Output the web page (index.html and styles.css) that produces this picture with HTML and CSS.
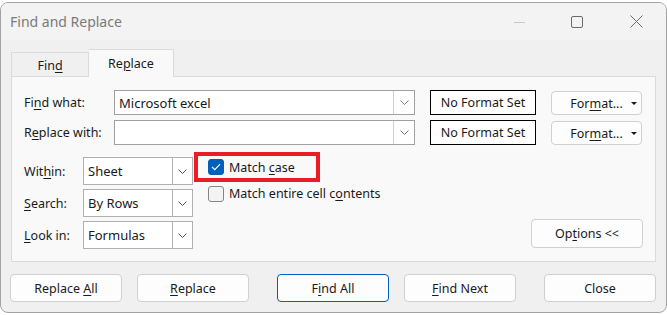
FILE: index.html
```html
<!DOCTYPE html>
<html lang="en">
<head>
  <meta charset="UTF-8" />
  <title>Find and Replace</title>
  <link rel="stylesheet" href="styles.css">
</head>
<body>
  <div class="window">
    <div class="titlebar">
      <span class="title">Find and Replace</span>
      <div class="controls">
        <span class="ctl ctl-min"><svg width="12" height="12" viewBox="0 0 12 12"><line x1="0" y1="6.5" x2="11" y2="6.5" stroke="#c8c8c8" stroke-width="1"/></svg></span>
        <span class="ctl ctl-max"><svg width="12" height="12" viewBox="0 0 12 12"><rect x="0.5" y="0.5" width="11" height="11" rx="1.5" fill="none" stroke="#6a6a6a" stroke-width="1"/></svg></span>
        <span class="ctl ctl-close"><svg width="13" height="13" viewBox="0 0 13 13"><path d="M0.5 0.5 L12.5 12.5 M12.5 0.5 L0.5 12.5" stroke="#6a6a6a" stroke-width="1"/></svg></span>
      </div>
    </div>

    <div class="content">
      <div class="tabs">
        <div class="tab"><span>Fin<u>d</u></span></div>
        <div class="tab active"><span>Re<u>p</u>lace</span></div>
      </div>

      <div class="panel">
        <div class="field-row">
          <span class="label">Fi<u>n</u>d what:</span>
          <div class="combo combo-wide">
            <span class="combo-text">Microsoft excel</span>
            <span class="combo-arrow"><svg width="9" height="5" viewBox="0 0 9 5"><polyline points="0.5,0.5 4.5,4.5 8.5,0.5" fill="none" stroke="#7a7a7a" stroke-width="1"/></svg></span>
          </div>
          <div class="fmt-box">No Format Set</div>
          <div class="btn fmt-btn"><span>For<u>m</u>at...</span><span class="tri"></span></div>
        </div>
        <div class="field-row">
          <span class="label">R<u>e</u>place with:</span>
          <div class="combo combo-wide">
            <span class="combo-text"></span>
            <span class="combo-arrow"><svg width="9" height="5" viewBox="0 0 9 5"><polyline points="0.5,0.5 4.5,4.5 8.5,0.5" fill="none" stroke="#7a7a7a" stroke-width="1"/></svg></span>
          </div>
          <div class="fmt-box">No Format Set</div>
          <div class="btn fmt-btn"><span>For<u>m</u>at...</span><span class="tri"></span></div>
        </div>

        <div class="lower">
          <div class="selects">
            <div class="select-row">
              <span class="label label-sm">Wit<u>h</u>in:</span>
              <div class="combo combo-sm">
                <span class="combo-text">Sheet</span>
                <span class="combo-arrow"><svg width="9" height="5" viewBox="0 0 9 5"><polyline points="0.5,0.5 4.5,4.5 8.5,0.5" fill="none" stroke="#555" stroke-width="1"/></svg></span>
              </div>
            </div>
            <div class="select-row">
              <span class="label label-sm"><u>S</u>earch:</span>
              <div class="combo combo-sm">
                <span class="combo-text">By Rows</span>
                <span class="combo-arrow"><svg width="9" height="5" viewBox="0 0 9 5"><polyline points="0.5,0.5 4.5,4.5 8.5,0.5" fill="none" stroke="#555" stroke-width="1"/></svg></span>
              </div>
            </div>
            <div class="select-row">
              <span class="label label-sm"><u>L</u>ook in:</span>
              <div class="combo combo-sm">
                <span class="combo-text">Formulas</span>
                <span class="combo-arrow"><svg width="9" height="5" viewBox="0 0 9 5"><polyline points="0.5,0.5 4.5,4.5 8.5,0.5" fill="none" stroke="#555" stroke-width="1"/></svg></span>
              </div>
            </div>
          </div>

          <div class="checks">
            <div class="highlight">
              <div class="check-row">
                <span class="box checked"><svg width="10" height="8" viewBox="0 0 10 8"><polyline points="1,4 3.8,6.6 9,1.2" fill="none" stroke="#fff" stroke-width="1.2"/></svg></span>
                <span>Match <u>c</u>ase</span>
              </div>
            </div>
            <div class="check-row check-plain">
              <span class="box"></span>
              <span>Match entire cell c<u>o</u>ntents</span>
            </div>
          </div>

          <div class="btn options-btn"><span>Op<u>t</u>ions &lt;&lt;</span></div>
        </div>
      </div>

      <div class="buttons">
        <div class="btn action"><span>Replace <u>A</u>ll</span></div>
        <div class="btn action"><span><u>R</u>eplace</span></div>
        <div class="btn action default"><span>F<u>i</u>nd All</span></div>
        <div class="btn action"><span><u>F</u>ind Next</span></div>
        <div class="btn action"><span>Close</span></div>
      </div>
    </div>
  </div>
</body>
</html>
```

FILE: styles.css
```css
* {
  margin: 0;
  padding: 0;
  box-sizing: border-box;
}

body {
  font-family: 'Noto Sans', 'Open Sans', sans-serif;
  font-size: 12.5px;
  color: #1a1a1a;
  background: #ffffff;
}

u {
  text-decoration-thickness: 1px;
  text-underline-offset: 2px;
}

.window {
  margin-top: 2px;
  width: 667px;
  height: 311px;
  border: 1px solid #a3a3a3;
  border-radius: 8px;
  background: #f0f0f0;
  overflow: hidden;
}

/* Title bar */
.titlebar {
  height: 37px;
  background: #f3f3f3;
  display: flex;
  align-items: center;
  padding-left: 9px;
}

.title {
  font-size: 14px;
  color: #7a7a7a;
}

.controls {
  margin-left: auto;
  display: flex;
  align-items: center;
}

.ctl {
  display: flex;
  align-items: center;
  justify-content: center;
  height: 37px;
}

.ctl-min { width: 12px; margin-right: 45px; }
.ctl-max { width: 12px; margin-right: 47px; }
.ctl-close { width: 13px; margin-right: 23px; }

/* Tabs and panel */
.content {
  padding: 9px 10px 0 10px;
}

.tabs {
  display: flex;
  align-items: flex-end;
  height: 27px;
}

.tab {
  height: 24px;
  width: 78px;
  border: 1px solid #dadada;
  border-bottom: none;
  background: #f0f0f0;
  display: flex;
  align-items: center;
  justify-content: center;
  padding-top: 2px;
}

.tab.active {
  height: 28px;
  width: 85px;
  margin-bottom: -1px;
  background: #f9f9f9;
  border-left: none;
  position: relative;
  z-index: 1;
  padding-top: 0;
}

.panel {
  height: 186px;
  width: 645px;
  border: 1px solid #dadada;
  background: #f9f9f9;
  padding: 13px 12px 0 12px;
}

.field-row {
  display: flex;
  align-items: center;
  height: 25px;
  margin-bottom: 5px;
}

.label {
  width: 90px;
  flex-shrink: 0;
}

.combo {
  display: flex;
  align-items: stretch;
  height: 25px;
  border: 1px solid #a0a0a0;
  background: #ffffff;
}

.combo-wide {
  width: 301px;
}

.combo-text {
  flex: 1;
  padding-left: 4px;
  display: flex;
  align-items: center;
  font-size: 13px;
}

.combo-arrow {
  width: 21px;
  border-left: 1px solid #d0d0d0;
  display: flex;
  align-items: center;
  justify-content: center;
}

.fmt-box {
  margin-left: 15px;
  width: 106px;
  height: 25px;
  border: 1px solid #000000;
  background: #ffffff;
  display: flex;
  align-items: center;
  justify-content: center;
}

.btn {
  border: 1px solid #d0d0d0;
  border-radius: 4px;
  background: #fdfdfd;
  display: flex;
  align-items: center;
  justify-content: center;
  white-space: nowrap;
}

.fmt-btn {
  margin-left: 15px;
  width: 91px;
  height: 24px;
  margin-top: 1px;
  padding-left: 14px;
  gap: 8px;
}

.tri {
  width: 0;
  height: 0;
  border-left: 3px solid transparent;
  border-right: 3px solid transparent;
  border-top: 3px solid #1a1a1a;
}

/* Lower options */
.lower {
  display: flex;
  align-items: flex-start;
  margin-top: 7px;
}

.selects {
  padding-top: 5px;
  display: flex;
  flex-direction: column;
  gap: 4px;
}

.select-row {
  display: flex;
  align-items: center;
}

.label-sm {
  width: 59px;
}

.combo-sm {
  width: 110px;
  height: 28px;
  border-color: #b0b0b0;
}

.combo-sm .combo-arrow {
  width: 20px;
  border-left-color: #b0b0b0;
}

.checks {
  margin-left: 1px;
}

.highlight {
  width: 126px;
  height: 30px;
  border: 4px solid #e81d25;
  padding-left: 10px;
  display: flex;
  align-items: center;
}

.check-row {
  display: flex;
  align-items: center;
  gap: 5px;
}

.check-plain {
  margin-top: 3px;
  margin-left: 14px;
}

.box {
  width: 16px;
  height: 16px;
  border: 1px solid #858585;
  border-radius: 3px;
  background: #f3f3f3;
  display: flex;
  align-items: center;
  justify-content: center;
}

.box.checked {
  background: #005fb8;
  border-color: #005fb8;
}

.options-btn {
  margin-left: auto;
  margin-top: 67px;
  width: 112px;
  height: 29px;
}

/* Bottom buttons */
.buttons {
  display: flex;
  margin-top: 12px;
  margin-left: -1px;
}

.action {
  width: 112px;
  height: 28px;
}

.action:nth-child(2) { margin-left: 15px; }
.action:nth-child(3) { margin-left: 28px; }
.action:nth-child(4) { margin-left: 15px; }
.action:nth-child(5) { margin-left: 28px; }

.action.default {
  border-color: #005fb8;
}
```
